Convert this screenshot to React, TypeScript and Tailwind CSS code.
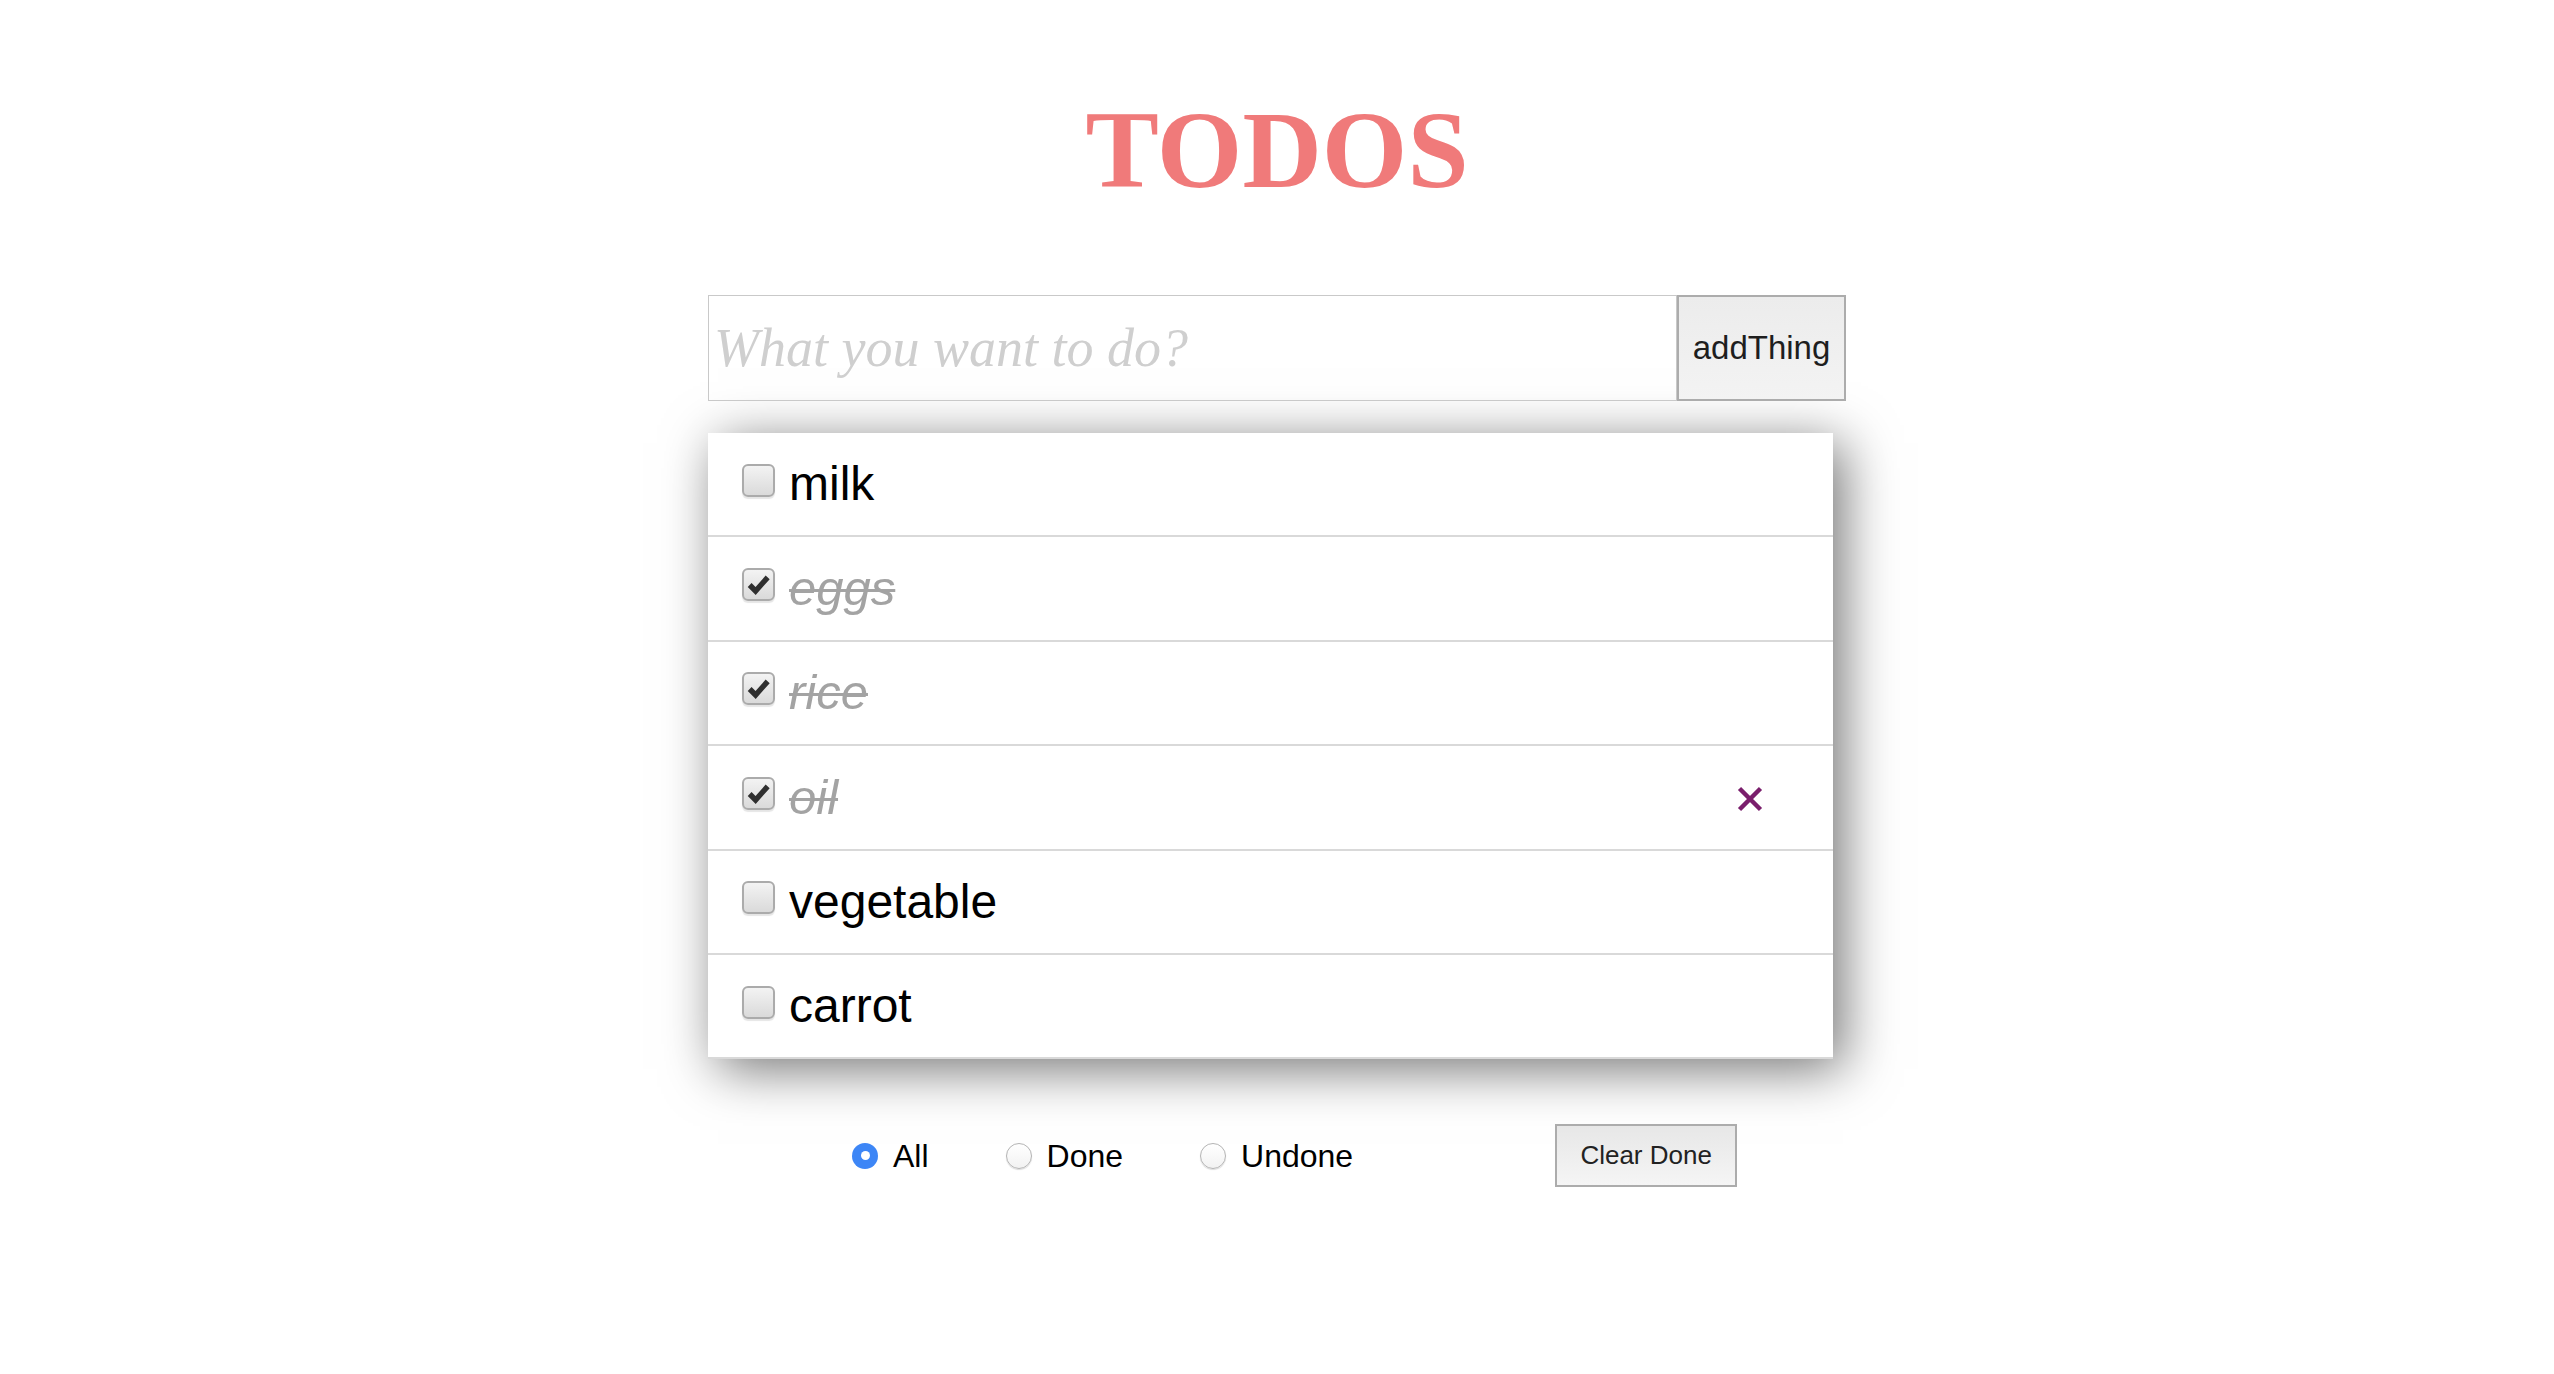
import { useState } from "react";

type Todo = { id: number; text: string; done: boolean };

const initialTodos: Todo[] = [
  { id: 1, text: "milk", done: false },
  { id: 2, text: "eggs", done: true },
  { id: 3, text: "rice", done: true },
  { id: 4, text: "oil", done: true },
  { id: 5, text: "vegetable", done: false },
  { id: 6, text: "carrot", done: false },
];

const CheckBox = ({ checked }: { checked: boolean }) => (
  <div className="relative mb-[8px] h-[33px] w-[33px] shrink-0 rounded-[6px] border-2 border-[#ababab] bg-gradient-to-b from-[#f3f3f3] to-[#dadada] shadow-[0_2px_1px_rgba(0,0,0,0.1)]">
    {checked && (
      <svg viewBox="0 0 24 24" className="absolute left-[2px] top-[2px] h-[25px] w-[25px]">
        <path
          d="M3.5 12.5 L9.2 18.2 L20.8 5.2"
          fill="none"
          stroke="#2f2f2f"
          strokeWidth="5.2"
          strokeLinejoin="miter"
        />
      </svg>
    )}
  </div>
);

const Radio = ({ checked }: { checked: boolean }) =>
  checked ? (
    <div className="flex h-[26px] w-[26px] shrink-0 items-center justify-center rounded-full bg-[#3d86f6]">
      <div className="h-[9px] w-[9px] rounded-full bg-white" />
    </div>
  ) : (
    <div className="h-[26px] w-[26px] shrink-0 rounded-full border border-[#b4b4b4] bg-gradient-to-b from-white to-[#f2f2f2] shadow-[0_1px_1px_rgba(0,0,0,0.14)]" />
  );

const TodoRow = ({ todo, hovered }: { todo: Todo; hovered: boolean }) => (
  <li className="flex h-[104.4px] items-center border-b-2 border-[#d9d9d9] pl-[34px]">
    <CheckBox checked={todo.done} />
    <span
      className={
        todo.done
          ? "ml-[14px] text-[49px] italic text-[#a3a3a3] line-through decoration-[#a3a3a3] decoration-[3px]"
          : "ml-[14px] text-[48px] text-black"
      }
    >
      {todo.text}
    </span>
    {hovered && (
      <svg viewBox="0 0 26 26" className="ml-auto mr-[70px] mt-[4px] h-[26px] w-[26px]">
        <path d="M2.5 2.5 L23.5 23.5 M23.5 2.5 L2.5 23.5" stroke="#7a1e6c" strokeWidth="4.5" />
      </svg>
    )}
  </li>
);

export default function App() {
  const [todos] = useState(initialTodos);
  const [filter, setFilter] = useState("All");

  return (
    <div className="min-h-screen bg-white pt-[95px] font-['Liberation_Sans',Arial,sans-serif]">
      <h1 className="text-center font-['Liberation_Serif',serif] text-[110px] font-bold leading-none text-[#f07a7a]">
        TODOS
      </h1>

      <div className="mx-auto mt-[90px] w-[1138px]">
        <div className="flex h-[106px]">
          <input
            className="min-w-0 flex-1 border border-[#c9c9c9] px-[5px] font-['Liberation_Serif',serif] text-[54px] outline-none placeholder:italic placeholder:text-[#cfcfcf]"
            placeholder="What you want to do?"
          />
          <button className="w-[169px] border-2 border-[#acacac] bg-gradient-to-b from-[#ececec] to-[#f3f3f3] text-[33px] text-[#1e1e1e]">
            addThing
          </button>
        </div>

        <ul className="mt-[32px] w-[1125px] bg-white shadow-[10px_10px_50px_rgba(0,0,0,0.55)]">
          {todos.map((t) => (
            <TodoRow key={t.id} todo={t} hovered={t.id === 4} />
          ))}
        </ul>

        <div className="mt-[65px] flex h-[63px] items-center pl-[144px]">
          <div className="flex items-center gap-[77px]">
            {["All", "Done", "Undone"].map((f) => (
              <label key={f} className="flex cursor-pointer items-center gap-[15px]" onClick={() => setFilter(f)}>
                <Radio checked={filter === f} />
                <span className="text-[32px] text-black">{f}</span>
              </label>
            ))}
          </div>
          <button className="ml-[202px] h-[63px] w-[182px] border-2 border-[#acacac] bg-gradient-to-b from-[#e7e7e7] to-[#f5f5f5] text-[26px] text-[#222]">
            Clear Done
          </button>
        </div>
      </div>
    </div>
  );
}
